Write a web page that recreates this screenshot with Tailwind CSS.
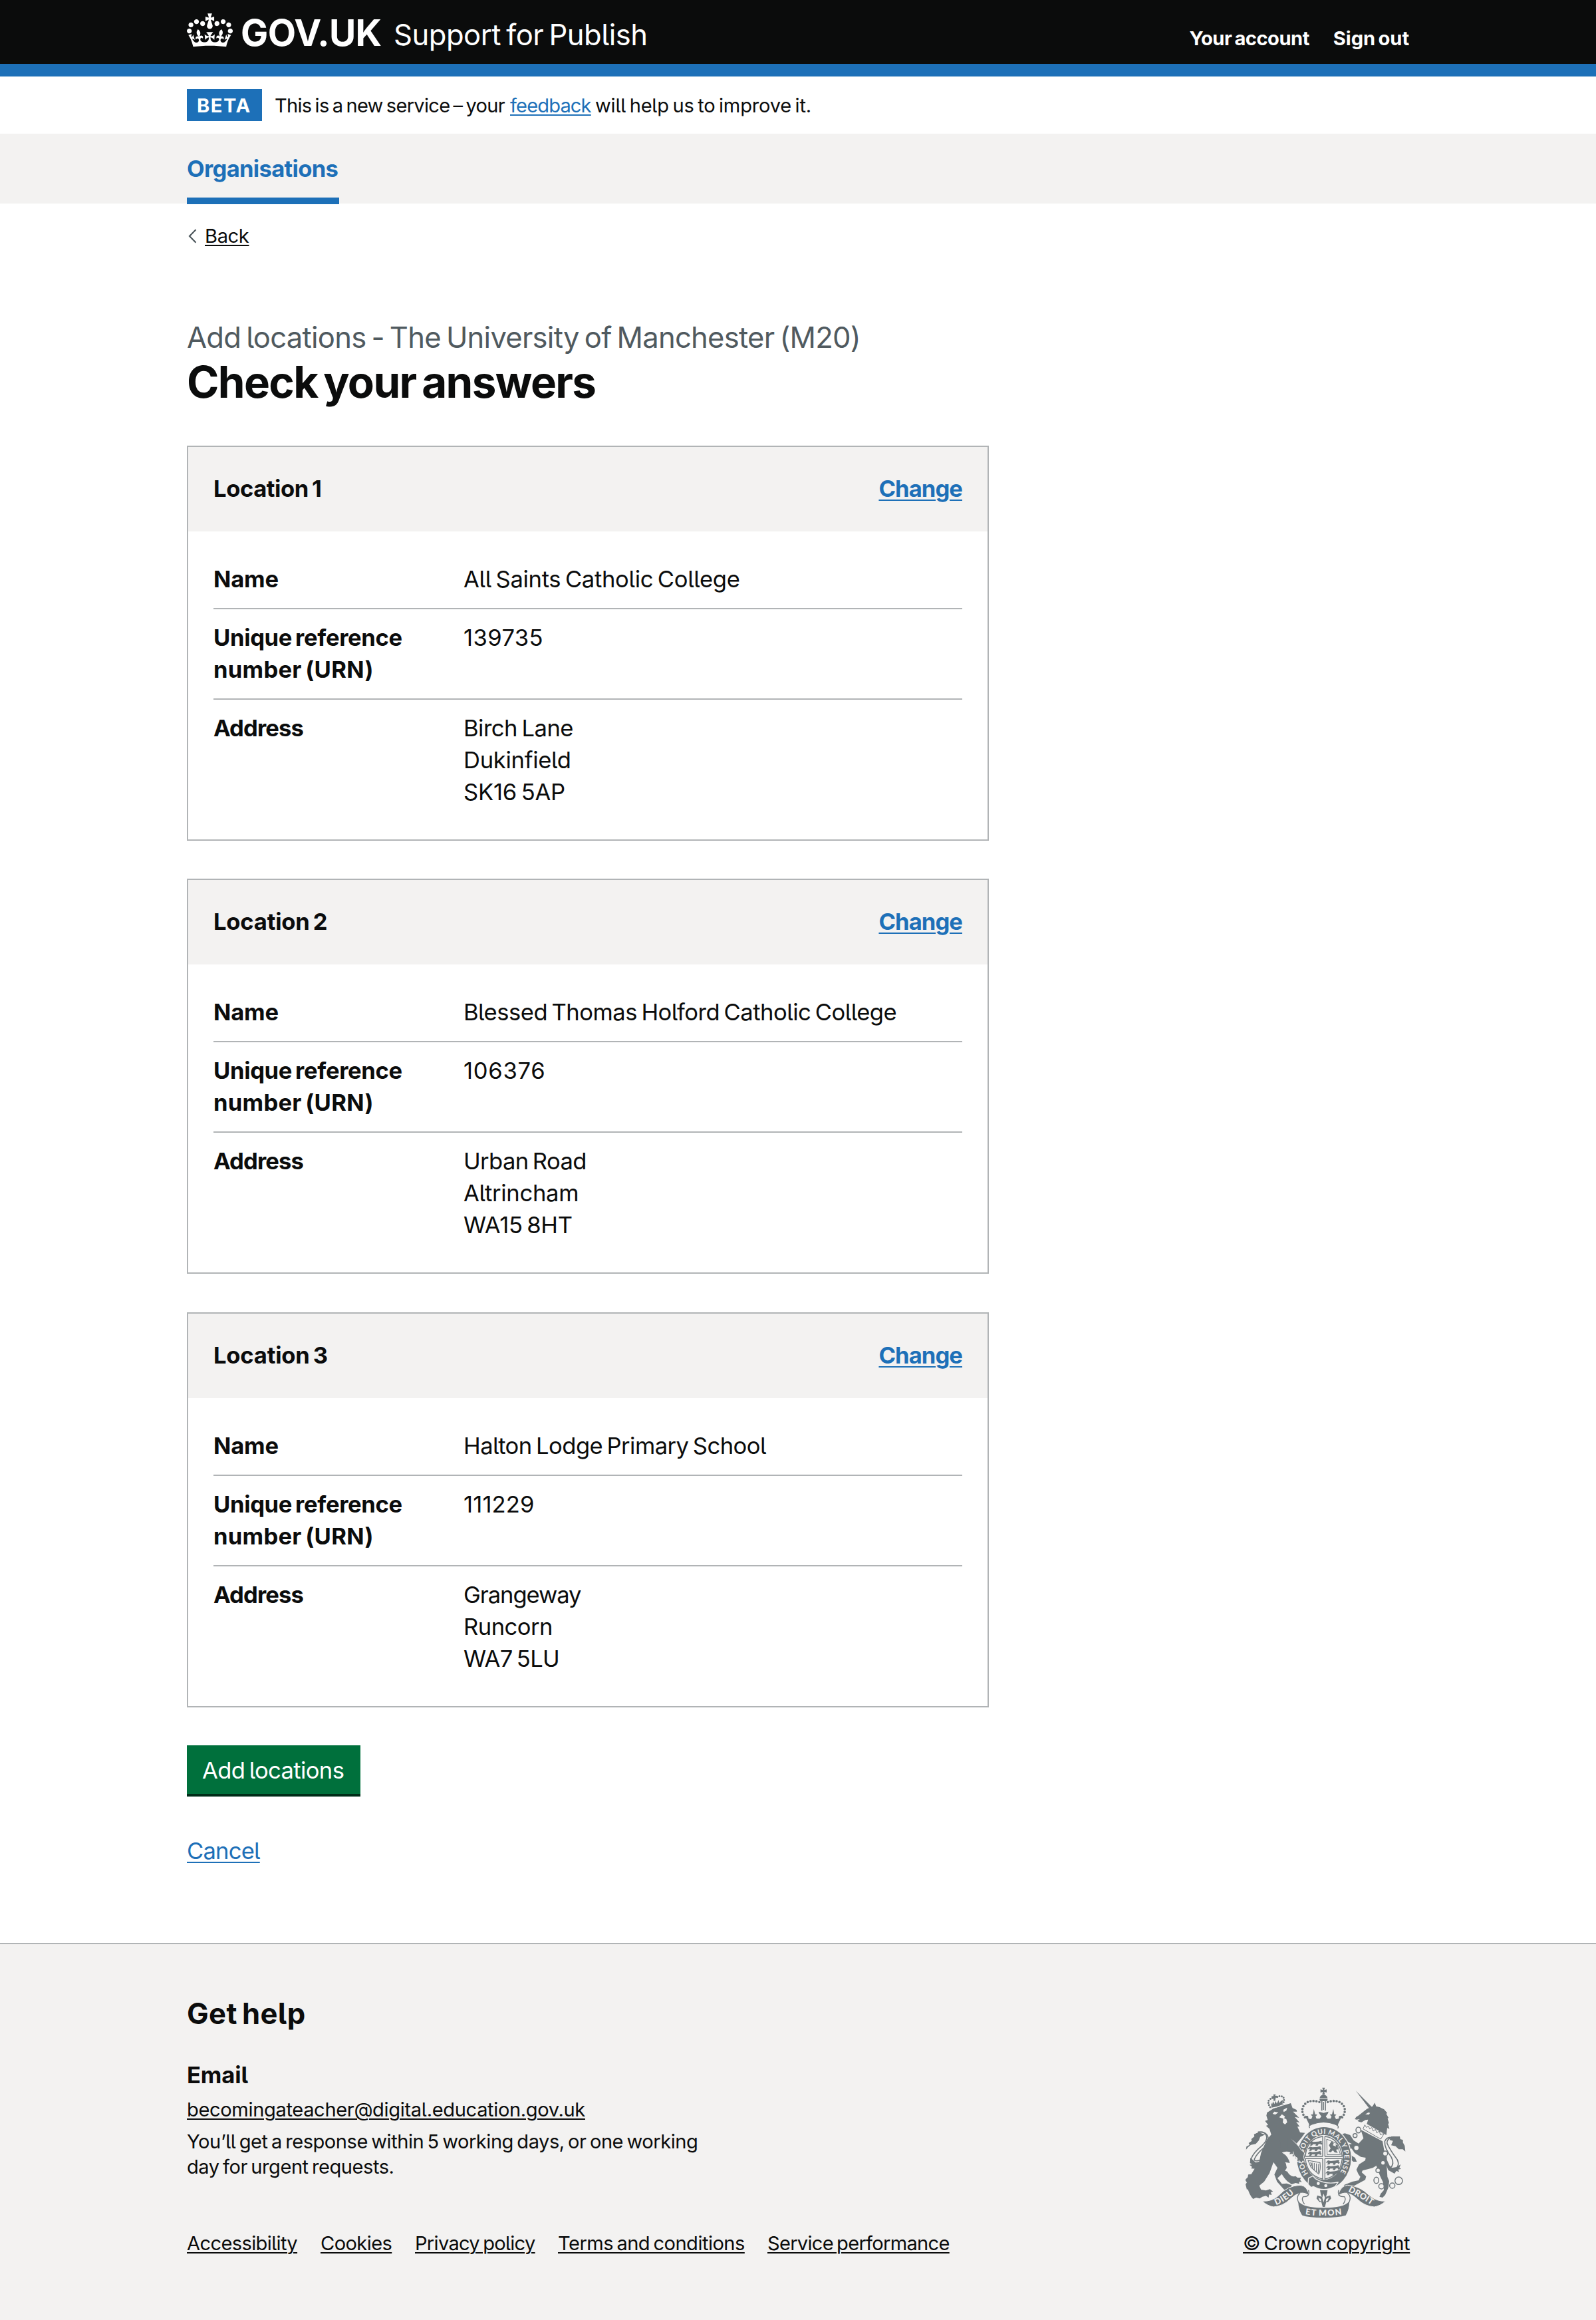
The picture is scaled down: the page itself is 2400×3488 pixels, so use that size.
<!DOCTYPE html>
<html lang="en">
<head>
<meta charset="utf-8">
<title>Check your answers - Support for Publish - GOV.UK</title>
<script src="https://cdn.jsdelivr.net/npm/@tailwindcss/browser@4"></script>
</head>
<body class="bg-white font-[Inter,'Liberation_Sans',sans-serif] text-[#0b0c0c] [font-feature-settings:'cv05'] [&_*]:[word-spacing:-0.08em]">

<header class="bg-[#0b0c0c] border-b-[19px] border-[#1d70b8] h-[115px] text-white">
  <div class="w-[1838px] mx-auto flex items-baseline h-24 pt-[20px] whitespace-nowrap">
    <svg class="w-[69px] h-[51px] self-start shrink-0" viewBox="0 0 132 97" fill="currentColor"><path fill-rule="evenodd" d="M25 30.2c3.5 1.5 7.7-.2 9.1-3.7 1.5-3.6-.2-7.8-3.9-9.2-3.6-1.4-7.6.3-9.1 3.9-1.4 3.5.3 7.5 3.9 9zM9 39.5c3.6 1.5 7.8-.2 9.2-3.7 1.5-3.6-.2-7.8-3.9-9.1-3.6-1.5-7.6.2-9.1 3.8-1.4 3.5.3 7.5 3.8 9zM4.4 57.2c3.5 1.5 7.7-.2 9.1-3.8 1.5-3.6-.2-7.7-3.9-9.1-3.5-1.5-7.6.3-9.1 3.8-1.4 3.5.3 7.6 3.9 9.1zm38.3-21.4c3.5 1.5 7.7-.2 9.1-3.8 1.5-3.6-.2-7.7-3.9-9.1-3.6-1.5-7.6.3-9.1 3.8-1.3 3.6.4 7.7 3.9 9.1zm64.4-5.6c-3.6 1.5-7.8-.2-9.1-3.7-1.5-3.6.2-7.8 3.8-9.2 3.6-1.4 7.7.3 9.2 3.9 1.3 3.5-.4 7.5-3.9 9zm15.9 9.3c-3.6 1.5-7.7-.2-9.1-3.7-1.5-3.6.2-7.8 3.7-9.1 3.6-1.5 7.7.2 9.2 3.8 1.5 3.5-.3 7.5-3.8 9zm4.7 17.7c-3.6 1.5-7.8-.2-9.2-3.8-1.5-3.6.2-7.7 3.9-9.1 3.6-1.5 7.7.3 9.2 3.8 1.3 3.5-.4 7.6-3.9 9.1zM89.3 35.8c-3.6 1.5-7.8-.2-9.2-3.8-1.4-3.6.2-7.7 3.9-9.1 3.6-1.5 7.7.3 9.2 3.8 1.4 3.6-.3 7.7-3.9 9.1zM69.7 17.7l8.9 4.7V9.3l-8.9 2.8c-.2-.3-.5-.6-.9-.9L72.4 0H59.6l3.5 11.2c-.3.3-.6.5-.9.9l-8.8-2.8v13.1l8.8-4.7c.3.3.6.7.9.9l-5 15.4v.1c-.2.8-.4 1.6-.4 2.4 0 4.1 3.1 7.5 7 8.1h.2c.3 0 .7.1 1 .1.4 0 .7 0 1-.1h.2c4-.6 7.1-4.1 7.1-8.1 0-.8-.1-1.7-.4-2.4V34l-5.1-15.4c.4-.2.7-.6 1-.9zM66 92.8c16.9 0 32.8 1.1 47.1 3.2 4-16.9 8.9-26.7 14-33.5l-9.6-3.4c1 4.9 1.1 7.2 0 10.2-1.5-1.4-3-4.3-4.2-8.7L108.6 76c2.8-2 5-3.2 7.5-3.3-4.4 9.4-10 11.9-13.6 11.2-4.3-.8-6.3-4.6-5.6-7.9 1-4.7 5.7-5.9 8-.5 4.3-8.7-3-11.4-7.6-8.8 7.1-7.2 7.9-13.5 2.1-21.1-8 6.1-8.1 12.3-4.5 20.8-4.7-5.4-12.1-2.5-9.5 6.2 3.4-5.2 7.9-2 7.2 3.1-.6 4.3-6.4 7.8-13.5 7.2-10.3-.9-10.9-8-11.2-13.8 2.5-.5 7.1 1.8 11 7.3L80.2 60c-4.1 4.4-8 5.3-12.3 5.4 1.4-4.4 8-11.6 8-11.6H55.5s6.4 7.2 7.9 11.6c-4.2-.1-8-1-12.3-5.4l1.4 16.4c3.9-5.5 8.5-7.7 10.9-7.3-.3 5.8-.9 12.8-11.1 13.8-7.2.6-12.9-2.9-13.5-7.2-.7-5 3.8-8.3 7.1-3.1 2.7-8.7-4.6-11.6-9.4-6.2 3.7-8.5 3.6-14.7-4.6-20.8-5.8 7.6-5 13.9 2.2 21.1-4.7-2.6-11.9.1-7.7 8.8 2.3-5.5 7.1-4.2 8.1.5.7 3.3-1.3 7.1-5.7 7.9-3.5.7-9-1.8-13.5-11.2 2.5.1 4.7 1.3 7.5 3.3l-4.7-15.4c-1.2 4.4-2.7 7.2-4.3 8.7-1.1-3-.9-5.3 0-10.2l-9.5 3.4c5 6.9 9.9 16.7 14 33.5 14.8-2.1 30.8-3.2 47.7-3.2z"/></svg>
    <span class="relative top-px ml-[12px] w-[230px] text-[55px] leading-[57px] font-bold tracking-[-0.0118em]">GOV.UK</span>
    <span class="text-[43.6px] leading-[57px] tracking-[-0.0118em]">Support for Publish</span>
    <nav class="ml-auto flex gap-[36px] text-[29.1px] leading-[38px] font-bold">
      <a class="tracking-[-0.0167em]">Your account</a>
      <a class="tracking-[-0.0020em]">Sign out</a>
    </nav>
  </div>
</header>

<div class="w-[1838px] mx-auto h-[86px] pt-[19px] flex items-start text-[29.1px] whitespace-nowrap">
  <strong class="w-[113px] h-12 pl-[15px] pt-[6px] leading-[38px] bg-[#1d70b8] text-white font-bold tracking-[0.0544em]">BETA</strong>
  <p class="ml-[19px] pt-[6px] leading-[38px] flex"><span class="w-[354px] tracking-[-0.0250em]">This is a new service – your</span><a class="w-[122px] mr-[6px] text-[#1d70b8] tracking-[-0.0300em] underline underline-offset-[3px] decoration-2">feedback</a><span class="tracking-[-0.0075em]">will help us to improve it.</span></p>
</div>

<div class="bg-[#f3f2f1] h-[105px]">
  <div class="w-[1838px] mx-auto h-full flex">
    <a class="w-[229px] h-[106px] pt-[28px] border-b-[10px] border-[#1d70b8] text-[#1d70b8] text-[34.6px] leading-[48px] font-bold tracking-[-0.0202em]">Organisations</a>
  </div>
</div>

<main class="w-[1838px] mx-auto whitespace-nowrap">
  <div class="flex items-center pt-[30px] h-[68px] text-[29.1px] leading-[38px]">
    <svg class="w-[16px] h-[22px] mr-[11px] text-[#505a5f]" viewBox="0 0 16 22" fill="none" stroke="currentColor" stroke-width="2.2"><path d="M13.5 1.2 4 11l9.500 9.800"/></svg>
    <a class="underline underline-offset-[3px] decoration-2 tracking-[-0.0130em]">Back</a>
  </div>

  <div class="pt-[105px] text-[43.6px] leading-[57px] text-[#505a5f] tracking-[-0.0173em]">Add locations - The University of Manchester (M20)</div>
  <h1 class="h-[134px] pt-px text-[65.5px] leading-[76px] font-bold tracking-[-0.0250em]">Check your answers</h1>

  <div class="w-[1206px] flex flex-col gap-[57px] text-[34.6px] leading-[48px]">
    <section class="border-2 border-[#b1b4b6] h-[594px]">
      <div class="h-[127px] px-[38px] pb-[3px] flex items-center justify-between bg-[#f3f2f1] font-bold"><h2 class="tracking-[-0.0122em]">Location 1</h2><a class="text-[#1d70b8] underline underline-offset-[4px] decoration-2 tracking-[-0.0270em]">Change</a></div>
      <dl class="mx-[38px] pt-[28px]">
        <div class="flex pt-[19px] pb-[20px] border-b-2 border-[#b1b4b6]"><dt class="w-[376px] font-bold tracking-[-0.0047em]">Name</dt><dd class="tracking-[-0.0093em]">All Saints Catholic College</dd></div>
        <div class="flex pt-[18px] pb-[20px] border-b-2 border-[#b1b4b6]"><dt class="w-[376px] font-bold"><span class="tracking-[-0.0101em]">Unique reference</span><br><span class="tracking-[0.0075em]">number (URN)</span></dt><dd class="tracking-[0.0119em]">139735</dd></div>
        <div class="flex pt-[18px]"><dt class="w-[376px] font-bold tracking-[-0.0260em]">Address</dt><dd><span class="tracking-[-0.0151em]">Birch Lane</span><br><span class="tracking-[-0.0087em]">Dukinfield</span><br><span class="tracking-[-0.0070em]">SK16 5AP</span></dd></div>
      </dl>
    </section>
    <section class="border-2 border-[#b1b4b6] h-[594px]">
      <div class="h-[127px] px-[38px] pb-[3px] flex items-center justify-between bg-[#f3f2f1] font-bold"><h2 class="tracking-[-0.0060em]">Location 2</h2><a class="text-[#1d70b8] underline underline-offset-[4px] decoration-2 tracking-[-0.0270em]">Change</a></div>
      <dl class="mx-[38px] pt-[28px]">
        <div class="flex pt-[19px] pb-[20px] border-b-2 border-[#b1b4b6]"><dt class="w-[376px] font-bold tracking-[-0.0047em]">Name</dt><dd class="tracking-[-0.0147em]">Blessed Thomas Holford Catholic College</dd></div>
        <div class="flex pt-[18px] pb-[20px] border-b-2 border-[#b1b4b6]"><dt class="w-[376px] font-bold"><span class="tracking-[-0.0101em]">Unique reference</span><br><span class="tracking-[0.0075em]">number (URN)</span></dt><dd class="tracking-[0.0202em]">106376</dd></div>
        <div class="flex pt-[18px]"><dt class="w-[376px] font-bold tracking-[-0.0260em]">Address</dt><dd><span class="tracking-[-0.0180em]">Urban Road</span><br><span class="tracking-[-0.0085em]">Altrincham</span><br><span class="tracking-[-0.0090em]">WA15 8HT</span></dd></div>
      </dl>
    </section>
    <section class="mt-px border-2 border-[#b1b4b6] h-[594px]">
      <div class="h-[127px] px-[38px] pb-[3px] flex items-center justify-between bg-[#f3f2f1] font-bold"><h2 class="tracking-[-0.0060em]">Location 3</h2><a class="text-[#1d70b8] underline underline-offset-[4px] decoration-2 tracking-[-0.0270em]">Change</a></div>
      <dl class="mx-[38px] pt-[28px]">
        <div class="flex pt-[19px] pb-[20px] border-b-2 border-[#b1b4b6]"><dt class="w-[376px] font-bold tracking-[-0.0047em]">Name</dt><dd class="tracking-[-0.0158em]">Halton Lodge Primary School</dd></div>
        <div class="flex pt-[18px] pb-[20px] border-b-2 border-[#b1b4b6]"><dt class="w-[376px] font-bold"><span class="tracking-[-0.0101em]">Unique reference</span><br><span class="tracking-[0.0075em]">number (URN)</span></dt><dd class="tracking-[0.0040em]">111229</dd></div>
        <div class="flex pt-[18px]"><dt class="w-[376px] font-bold tracking-[-0.0260em]">Address</dt><dd><span class="tracking-[-0.0307em]">Grangeway</span><br><span class="tracking-[-0.0150em]">Runcorn</span><br><span class="tracking-[-0.0191em]">WA7 5LU</span></dd></div>
      </dl>
    </section>
  </div>

  <div class="h-[354px] pt-[57px] text-[34.6px] leading-[48px]">
    <button class="block w-[261px] h-[77px] pl-[23px] pt-px text-left bg-[#00703c] border-b-4 border-[#002d18] text-white tracking-[-0.0183em]">Add locations</button>
    <a class="inline-block mt-[57px] text-[#1d70b8] underline underline-offset-[4px] decoration-2 tracking-[-0.0230em]">Cancel</a>
  </div>
</main>

<footer class="bg-[#f3f2f1] border-t-2 border-[#b1b4b6] h-[567px] pt-[76px] whitespace-nowrap">
  <div class="w-[1838px] mx-auto flex items-end justify-between">
    <div class="text-[29.1px] leading-[38px]">
      <h2 class="text-[43.6px] leading-[57px] font-bold tracking-[0.0085em]">Get help</h2>
      <h3 class="mt-[39px] text-[34.6px] leading-[48px] font-bold tracking-[-0.0040em]">Email</h3>
      <p class="mt-[10px]"><a class="underline underline-offset-[3px] decoration-2 tracking-[-0.0127em]">becomingateacher@digital.education.gov.uk</a></p>
      <p class="mt-[10px] tracking-[-0.0165em]">You’ll get a response within 5 working days, or one working</p>
      <p class="tracking-[-0.0163em]">day for urgent requests.</p>
      <div class="mt-[77px] flex">
        <a class="w-[201px] tracking-[-0.0220em]"><span class="underline underline-offset-[3px] decoration-2">Accessibility</span></a>
        <a class="w-[142px] tracking-[-0.0207em]"><span class="underline underline-offset-[3px] decoration-2">Cookies</span></a>
        <a class="w-[215px] tracking-[-0.0245em]"><span class="underline underline-offset-[3px] decoration-2">Privacy policy</span></a>
        <a class="w-[315px] tracking-[-0.0183em]"><span class="underline underline-offset-[3px] decoration-2">Terms and conditions</span></a>
        <a class="tracking-[-0.0248em]"><span class="underline underline-offset-[3px] decoration-2">Service performance</span></a>
      </div>
    </div>
    <div class="w-[250px] flex flex-col text-[29.1px] leading-[38px]">
      <!-- Royal coat of arms -->
      <svg class="ml-[4px] w-[242px] h-[200px] mb-[18px] text-[#6f777b]" viewBox="100 50 726 600" fill="currentColor" stroke-linejoin="round">
        <defs>
          <path id="garter" d="M386 449A93 108 0 1 1 520 449"/>
          <path id="sl" d="M238 588Q284 570 326 528"/>
          <path id="sc" d="M369 630Q452 642 538 630"/>
          <path id="sr" d="M562 526Q616 552 672 590"/>
          <g id="passant"><path d="M0 10l8-8 12 3 22-2 12-3 6 4-4 4 6 5-8 5-3-5-8 2-4 7-10-1 3-6-14 0-4 6-10 0 4-7-4-3-4 4z"/></g>
        </defs>
        <!-- crown -->
        <path d="M446 58h12l-3 11 11-3v14l-11-3 3 12h-12l3-12-11 3v-14l11 3z"/>
        <path d="M434 106q3-15 18-16q15 1 18 16z"/><path d="M433 109h38l-4 10h-30z"/>
        <g fill="none" stroke="currentColor">
          <path d="M368 192Q345 160 366 134Q390 108 436 124" stroke-width="11" stroke-linecap="round" stroke-dasharray="0 13.500"/>
          <path d="M536 192Q559 160 538 134Q514 108 468 124" stroke-width="11" stroke-linecap="round" stroke-dasharray="0 13.500"/>
          <path d="M444 118v44M460 118v44" stroke-width="5"/><path d="M452 122v36" stroke-width="4"/>
        </g>
        <path d="M368 184l14 2 2 12 12 2 6-12-8-8 10-2 4-24 6 24 10 2-8 8 4 10 14 0 8-10-10-14-2-8 22 6 22-6-2 8-10 14 8 10 14 0 4-10-8-8 10-2 6-24 4 24 10 2-8 8 6 12 12-2 2-12 14-2-18 38-4 20Q452 196 388 236l-2-14z"/>
        <path d="M390 240Q380 230 398 224Q452 202 506 224Q524 230 516 242" fill="#f3f2f1" stroke="currentColor" stroke-width="4"/>
        <!-- lion tail and body -->
        <path d="M178 395Q128 410 124 382Q134 352 172 322Q212 284 184 262Q168 252 142 272" fill="none" stroke="currentColor" stroke-width="5"/>
        <path d="M190 376Q136 398 140 380Q150 356 184 328Q214 296 196 270Q182 254 156 258" fill="none" stroke="currentColor" stroke-width="5"/>
        <path d="M102 338l2-14 14-8-4-8 14-10-2-8 14-12-2-10 22-8 28 10-22 10-6 16-14 16-22 4-12 10zM122 374l-2 24 10 6-12 2 12 10-6 6 18 2 18-14 30-14 6-22-22 14-28 8z"/>
        <path d="M198 170l28-18 78-24 8 22 18 8 2 8-18 0 28 28-20-4 22 26-16-4 16 22-10 0 12 26 22 2-14 20-24 28 4 20 24 16-12 20 18 34-16-12-4 6-12-14-8 2-10-20-22-28-28-22q-8 20 18 36l34 8 14 0-6 12 16 10-8 8 16 14-24-8 4 14-28-8-22-4 4 6 4 20-10 16-32 30 20 26 22-2 22 8-4 12 14 4-6 12-24 0-14-8-32-36-12-32 14-30-18-26-18 50-24 38-22 18 8 18 22 4 18-6 14 10-10 4 4 12-12-2-2 14-12-8-16 4-12 8-16-4-14 6-8-10-8-14-8-20-4 2-6-24 6-8-8-12 12-12 2-12 14-2 36-58 8-38 26-60 20-22-8-26-16-14 10-4-14-18 12-4-6-20 4-18z"/>
        <path d="M255 296h66l-6 56h-54z"/>
        <path d="M264 351Q284 342 302 350L298 358L314 356L312 368L328 366L326 378L342 382L352 470L324 456L304 462L286 440L302 408Q296 368 264 351z" fill="#f3f2f1"/>
        <path d="M254 425L288 436Q304 464 326 457L334 464L350 464L346 474L354 484L342 482L342 492L326 488L308 494L288 480Q264 456 254 425z"/>
        <!-- lion crown -->
        <path d="M211 146Q196 122 208 112Q222 100 234 106M268 134Q280 106 266 98Q252 92 236 104" fill="none" stroke="currentColor" stroke-width="9" stroke-linecap="round" stroke-dasharray="0 10.500"/>
        <path d="M226 88h10l-2 7 8-1 0 9-8 0 1 14-8 1-2-14-7 1-1-8 9-1zM214 126l6 8 4-14 6 12 6-14 5 12 8-16 3 13 8-9 8-4-2 26-48 11z"/>
        <path d="M218 150Q246 146 276 133" stroke="#f3f2f1" stroke-width="4" fill="none"/>
        <path d="M230 166l18 4-14 10-12-4zM270 158l18-10-4 14-12 6zM252 192l12-14 14 10-4 8 10 4 4 14-10 10-10-8 2-18z" fill="#f3f2f1"/>
        <!-- unicorn -->
        <path d="M597 72l76 76-12 8z"/>
        <path d="M766 430Q800 414 784 382Q752 340 738 308Q738 284 770 280" fill="none" stroke="currentColor" stroke-width="5"/>
        <path d="M752 422Q774 402 758 372Q726 330 728 300Q740 276 762 284" fill="none" stroke="currentColor" stroke-width="5"/>
        <path d="M758 278l38 0 2 12 12 4 0 12 8 14 3 26-12-10-18 0-14-14-20-4 8-20-16-4zM736 380l14 30 10 10 22-4 18-12-6 16 8 4-14 4 6 10-14-4-8 12-28-16-12-30z"/>
        <path d="M609 184l38-30 26-12 10-16 6 16 16 4 20 10 14 16-4 4 10 18-4 4 6 20-4 4 6 22-10-4-4 32-88-50 6-20-12 2-18 10-10-2-8-4 10-8-14 2-8-2 6-10z"/>
        <path d="M640 178l14-8 8 2-6 8z" fill="#f3f2f1"/>
        <path d="M620 248l98 52 8 44 12 26-2 28 4 62 8 20-4 30-14 32-12 12-14-4 6-14 14-16-4-36-14-30-16-44-16 10-46 12-4 8 20 18-4 16-56 30-18 4-12 12-16-8 8-16 36-14 28-6 8-16-8-10-10-22 12-24 28-18 2-12-22-4-28-18-14-20-16 12 18 22 14 8 8 18-16 0-22-20-16-28 16-14 2-16 14-2-20-10-18-18-2 10-14-8 6-8-4-8 20-6 24 8 16 24 22 14 22-24z"/>
        <path d="M638 226l8 12 8-8 6 14 10-6 6 16 10-8 6 16 12-8 4 16 18-6-16 26-80-46z" fill="#f3f2f1" stroke="currentColor" stroke-width="3"/>
        <g fill="#f3f2f1" stroke="currentColor" stroke-width="4.500"><ellipse cx="609" cy="249" rx="11" ry="13"/><circle cx="594" cy="274" r="9"/><circle cx="600" cy="330" r="12"/><circle cx="730" cy="355" r="11"/><circle cx="720" cy="397" r="10"/><circle cx="698" cy="431" r="10"/><ellipse cx="690" cy="476" rx="11" ry="14"/><circle cx="713" cy="503" r="12"/><circle cx="762" cy="500" r="12"/><circle cx="791" cy="478" r="17"/></g>
        <!-- garter and shield -->
        <ellipse cx="454" cy="376" rx="126" ry="144" fill="#f3f2f1"/>
        <ellipse cx="454" cy="376" rx="122" ry="140"/>
        <ellipse cx="453" cy="372" rx="86" ry="101" fill="#f3f2f1"/>
        <path d="M448 278v90h-78q6-80 78-90zM458 278q66 8 78 90h-78zM458 378h78q-8 78-78 92zM448 378v92q-72-16-78-92z" fill="none" stroke="currentColor" stroke-width="4"/>
        <g><use href="#passant" x="386" y="298"/><use href="#passant" x="382" y="322"/><use href="#passant" x="382" y="344"/><use href="#passant" x="464" y="384"/><use href="#passant" x="464" y="408"/><use href="#passant" x="462" y="432"/></g>
        <path d="M466 290l46 20 16 50-60 0z" fill="none" stroke="currentColor" stroke-width="3"/>
        <path d="M474 346l10-14-8-14 12-18 10 8-4 10 14 6-2-10 8 4 4 18-10 2 8 14-14-2-8-10-10 10z"/>
        <path d="M382 386l54 10q4 34-6 52l-34-30zM392 396q12 10 0 18M400 396l2 28M410 398l0 34M420 400l0 40M430 402l-2 40" fill="none" stroke="currentColor" stroke-width="3.500"/>
        <text font-size="31" font-weight="700" fill="#f3f2f1" font-family="Lato, sans-serif"><textPath href="#garter" textLength="462" startOffset="4">HONI SOIT QUI MAL Y PENSE</textPath></text>
        <path d="M384 466l20-10 10 12q50 30 104 16l-14 20q-52 26-98 0l-10 4-14-14z" stroke="#f3f2f1" stroke-width="4"/>
        <circle cx="428" cy="490" r="7" fill="#f3f2f1"/><circle cx="462" cy="500" r="7" fill="#f3f2f1"/>
        <!-- lion foreleg over the garter -->
        <path d="M302 288Q336 312 350 338L366 352L362 372L370 396L358 388L352 400L344 388L332 392L334 376L320 366L312 340L296 330z" stroke="#f3f2f1" stroke-width="3"/>
        <path d="M290 284l16 4 20 24-12 36-24-8z"/>
        <!-- pendant and scroll -->
        <path d="M436 520h34l-4 22-4 8 20-6 4 14-14 16-8 0-6 22h-10l-6-22-8 0-14-16 4-14 20 6-4-8z"/><path d="M452 536l6 18-6 22-6-22zM428 554l12 6 2 12-8-4zM476 554l-12 6-2 12 8-4z" fill="#f3f2f1"/>
        <path d="M175 570Q222 572 252 542Q290 500 346 498Q380 500 388 548Q372 530 346 534Q322 540 300 562Q270 592 226 596Q200 592 175 570z" stroke="#f3f2f1" stroke-width="3"/>
        <path d="M732 570Q690 572 656 542Q614 500 560 498Q528 500 516 548Q534 530 560 534Q584 540 606 562Q636 592 680 596Q708 592 732 570z" stroke="#f3f2f1" stroke-width="3"/>
        <path d="M346 534Q326 550 340 578Q342 610 356 630M384 520Q392 552 360 550Q350 560 366 584" fill="none" stroke="currentColor" stroke-width="4"/>
        <path d="M560 534Q580 550 566 578Q564 610 550 630M520 520Q512 552 546 550Q556 560 540 584" fill="none" stroke="currentColor" stroke-width="4"/>
        <path d="M340 572Q360 600 452 600Q546 600 566 572Q568 606 552 634Q520 644 452 645Q384 644 356 634Q340 606 340 572z"/>
        <g font-size="38" font-weight="900" fill="#f3f2f1" font-family="Lato, sans-serif"><text><textPath href="#sl" textLength="98">DIEU</textPath></text><text><textPath href="#sc" textLength="166">ET MON</textPath></text><text><textPath href="#sr" textLength="122">DROIT</textPath></text></g>
      </svg>
      <a class="underline underline-offset-[3px] decoration-2 tracking-[-0.0150em]">© Crown copyright</a>
    </div>
  </div>
</footer>
</body>
</html>
